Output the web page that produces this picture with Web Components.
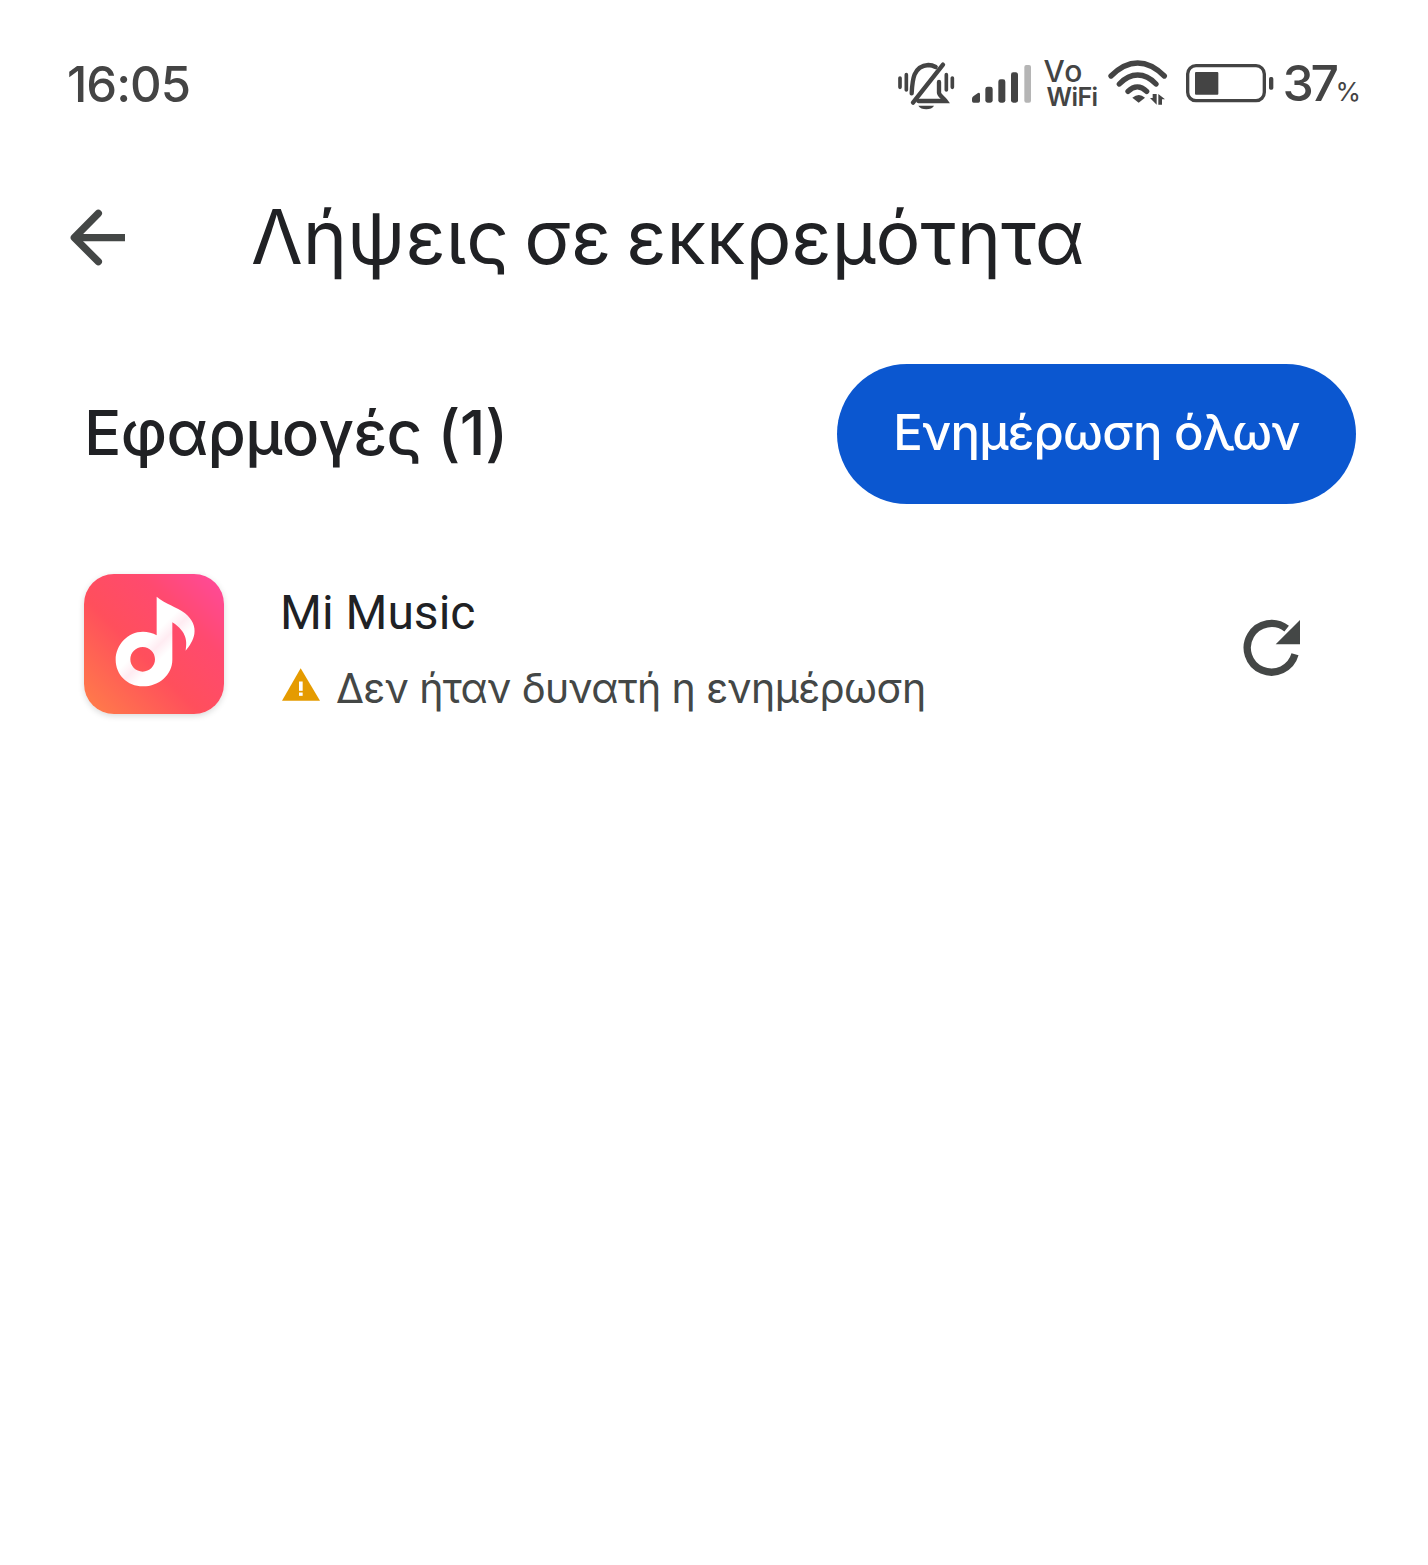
<!DOCTYPE html>
<html lang="el">
<head>
<meta charset="utf-8">
<title>Λήψεις σε εκκρεμότητα</title>
<style>
    html, body { margin: 0; padding: 0; background: #fff; }
    body { width: 1428px; height: 1565px; overflow: hidden; font-family: "Roboto", "Noto Sans", sans-serif; }
</style>
</head>
<body>
<status-bar></status-bar>
<top-bar>Λήψεις σε εκκρεμότητα</top-bar>
<section-head>Εφαρμογές (1)</section-head>
<app-row name="Mi Music" message="Δεν ήταν δυνατή η ενημέρωση"></app-row>

<script>
class StatusBar extends HTMLElement {
    constructor() {
        super();
        const shadowRoot = this.attachShadow({mode: 'open'});
        shadowRoot.innerHTML = `
            <style>
                :host { display: flex; align-items: center; height: 168px; padding: 0 67px; color: #444; font-family: "Inter", sans-serif; }
                .time { font-size: 49px; line-height: 56px; font-weight: 500; flex: 1; letter-spacing: -1px; margin-top: 2px; }
                svg { display: block; flex: none; }
                .vo { width: 52px; margin: 0 4px 0 11px; font-weight: 500; }
                .vo span { display: block; white-space: nowrap; }
                .vo .a { font-size: 30px; line-height: 25px; letter-spacing: 1px; margin-top: -1px; }
                .vo .b { font-size: 25px; line-height: 24px; letter-spacing: -.6px; margin: 1px 0 0 3px; font-weight: 600; }
                .level { font-size: 50px; line-height: 56px; font-weight: 500; letter-spacing: -3.5px; margin: 6px 0 0 8px; }
                .level small { font-size: 26px; font-weight: 400; letter-spacing: 0; }
            </style>
            <span class="time">16:05</span>
            <svg width="75" height="60" viewBox="0 0 225 180" fill="none" stroke="#444">
                <path d="M33 72v28M52 62v46M172 62v46M190 72v28" stroke-linecap="round" stroke-width="11"/>
                <path d="M72 146 162 32" stroke-linecap="round" stroke-width="13"/>
                <path d="M68 118c2-38 4-82 50-85 8 0 15 2 22 6M150 84v32c0 8 12 14 20 25H88" stroke-width="13" stroke-linecap="round"/>
                <path d="M88 155h47c-6 14-40 14-47 0z" fill="#444" stroke="none"/>
            </svg>
            <svg style="margin-left:7px" width="62" height="40" viewBox="275 72 186 120">
                <path d="M278 176q0-6 6-9l12-8q6-3 6 4v20q0 5-5 5h-14q-5 0-5-5z" fill="#444"/>
                <rect x="318" y="140" width="22" height="48" rx="7" fill="#444"/>
                <rect x="357" y="118" width="21" height="70" rx="7" fill="#444"/>
                <rect x="395" y="97" width="21" height="91" rx="7" fill="#444"/>
                <rect x="435" y="75" width="20" height="113" rx="6" fill="#b5b5b5"/>
            </svg>
            <div class="vo"><span class="a">Vo</span><span class="b">WiFi</span></div>
            <svg width="75" height="60" viewBox="0 0 225 180" fill="none" stroke="#444" stroke-width="16" stroke-linecap="round">
                <path d="M33 66c52-52 108-52 160 0"/>
                <path d="M58 90c34-36 76-36 110 0"/>
                <path d="M84 112c18-18 38-18 56 0"/>
                <path d="M97 131q20-16 38 0l-19 15z" fill="#444" stroke="none"/>
                <path d="M150 132h8v-12h12v32zM175 120l20 16h-9v16h-11z" fill="#444" stroke="none"/>
            </svg>
            <svg style="margin-left:10px" width="90" height="42" viewBox="45 70 270 126" fill="none">
                <rect x="53" y="78" width="230" height="105" rx="25" stroke="#444" stroke-width="10"/>
                <rect x="75" y="97" width="70" height="68" rx="3" fill="#444"/>
                <rect x="297" y="112" width="13" height="38" rx="5" fill="#444"/>
            </svg>
            <span class="level">37<small>%</small></span>
        `;
    }
}

class TopBar extends HTMLElement {
    constructor() {
        super();
        const shadowRoot = this.attachShadow({mode: 'open'});
        shadowRoot.innerHTML = `
            <style>
                :host { display: flex; align-items: center; height: 140px; padding-left: 49px; color: #202124; }
                svg { display: block; flex: none; }
                .title { margin: -2px 0 0 102px; font-family: "Inter", sans-serif; font-size: 75px; line-height: 84px; letter-spacing: 0; word-spacing: -6px; font-weight: 400; white-space: nowrap; }
            </style>
            <svg width="100" height="90" viewBox="0 9 300 270" fill="none" stroke="#444746" stroke-width="22">
                <path d="M228 143H78"/>
                <path d="M148 70 76 143l72 72" stroke-linecap="round" stroke-linejoin="round"/>
            </svg>
            <span class="title"><slot></slot></span>
        `;
    }
}

class SectionHead extends HTMLElement {
    constructor() {
        super();
        const shadowRoot = this.attachShadow({mode: 'open'});
        shadowRoot.innerHTML = `
            <style>
                :host { display: flex; align-items: center; justify-content: space-between; height: 140px; margin-top: 56px; padding: 0 72px 0 84px; color: #202124; }
                .label { font-family: "Inter", sans-serif; font-size: 62px; font-weight: 500; letter-spacing: -.65px; margin-top: -4px; }
                button { width: 519px; height: 140px; border: 0; border-radius: 70px; background: #0b57d0; color: #fff; font: 500 49px "Inter", sans-serif; letter-spacing: -.8px; padding: 0 0 4px; }
            </style>
            <span class="label"><slot></slot></span>
            <button>Ενημέρωση όλων</button>
        `;
    }
}

class AppRow extends HTMLElement {
    constructor() {
        super();
        const shadowRoot = this.attachShadow({mode: 'open'});
        shadowRoot.innerHTML = `
            <style>
                :host { display: flex; align-items: center; height: 140px; margin-top: 70px; padding: 0 108px 0 84px; }
                .app { flex: none; width: 140px; height: 140px; border-radius: 30px; box-shadow: 0 2px 6px rgba(0,0,0,.15); background: linear-gradient(45deg, #ff8048 0%, #ff4f5c 42%, #ff4a6f 70%, #ff4a9e 100%); }
                .app svg { display: block; }
                .text { flex: 1; margin-left: 58px; }
                .name { font-size: 48px; line-height: 64px; color: #202124; margin: 9px 0 0 -2px; }
                .msg { display: flex; align-items: center; gap: 16px; margin-top: 15px; font-family: "Inter", sans-serif; font-size: 41px; letter-spacing: -.6px; line-height: 56px; color: #444746; }
                .msg svg { margin-top: -7px; }
                .refresh { display: block; flex: none; margin-top: 4px; }
            </style>
            <div class="app">
                <svg width="140" height="140" viewBox="42 42 420 420">
                    <defs>
                        <linearGradient id="note" gradientUnits="userSpaceOnUse" x1="200" y1="190" x2="320" y2="310">
                            <stop offset="0" stop-color="#fff"/>
                            <stop offset=".35" stop-color="#fff"/>
                            <stop offset=".55" stop-color="#ffecf2"/>
                            <stop offset=".75" stop-color="#fff"/>
                        </linearGradient>
                    </defs>
                    <path fill-rule="evenodd" fill="url(#note)" d="M260 110c25 22 60 30 85 50 22 18 32 40 28 62-3 18-14 36-26 50 4-26 6-55-40-85v112c0 45-40 80-88 80s-82-36-82-80 36-84 82-84c14 0 30 4 41 11zM218 261c-21 0-37 17-37 37s16 37 37 37 37-17 37-37-16-37-37-37z"/>
                </svg>
            </div>
            <div class="text">
                <div class="name"></div>
                <div class="msg">
                    <svg width="38" height="33" viewBox="636 330 114 98">
                        <path d="M692 330l58 98H636z" fill="#e59b00"/>
                        <rect x="687" y="370" width="11" height="28" fill="#fff"/>
                        <rect x="687" y="403" width="11" height="10" fill="#fff"/>
                    </svg>
                    <span class="message"></span>
                </div>
            </div>
            <svg class="refresh" width="100" height="90" viewBox="0 0 300 270" fill="none">
                <path d="M225 160A73 73 0 1 1 200 83" stroke="#444746" stroke-width="22"/>
                <path d="M240 57v73h-73z" fill="#444746"/>
            </svg>
        `;
        shadowRoot.querySelector('.name').textContent = this.getAttribute('name');
        shadowRoot.querySelector('.message').textContent = this.getAttribute('message');
    }
}

window.customElements.define('status-bar', StatusBar);
window.customElements.define('top-bar', TopBar);
window.customElements.define('section-head', SectionHead);
window.customElements.define('app-row', AppRow);
</script>
</body>
</html>
